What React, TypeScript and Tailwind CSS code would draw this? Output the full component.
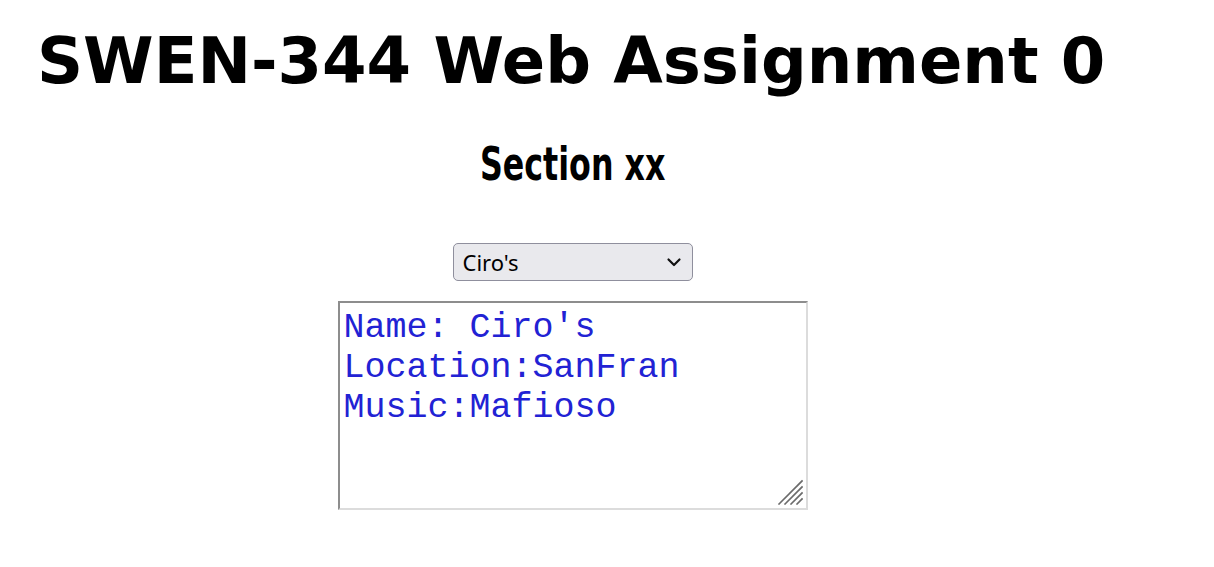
import React from "react";

function Grip() {
  return (
    <svg className="absolute right-[3px] bottom-[3px]" width="26" height="26" viewBox="0 0 26 26">
      <g stroke="#6b6b6b" strokeWidth="1.6" strokeLinecap="square">
        <line x1="2" y1="25" x2="25" y2="2" />
        <line x1="8" y1="25" x2="25" y2="8" />
        <line x1="14" y1="25" x2="25" y2="14" />
        <line x1="20" y1="25" x2="25" y2="20" />
      </g>
    </svg>
  );
}

export default function App() {
  return (
    <div className="bg-white min-h-[567px] w-[1214px] text-black">
      <h1
        className="pl-[37px] pt-[13px] text-[64px] font-bold leading-normal"
        style={{ fontFamily: '"DejaVu Sans", Verdana, sans-serif' }}
      >
        SWEN-344 Web Assignment 0
      </h1>
      <div className="w-[1145px] flex flex-col items-center">
        <h2
          className="mt-[20px] text-[47px] font-bold leading-normal scale-x-[0.75] origin-center whitespace-nowrap"
          style={{ fontFamily: '"DejaVu Sans Condensed", "DejaVu Sans", sans-serif' }}
        >
          Section xx
        </h2>
        <div className="mt-[43px] relative w-[240px] h-[38px] rounded-[5px] border border-[#8f8f9d] bg-[#e9e9ed] flex items-center pl-[9px]">
          <span
            className="text-[22px] leading-none"
            style={{ fontFamily: '"Noto Sans", "Open Sans", sans-serif' }}
          >
            Ciro's
          </span>
          <svg className="absolute right-[10px] top-[12px]" width="16" height="12" viewBox="0 0 16 12">
            <path d="M2.5 3.5 L8 9 L13.5 3.5" fill="none" stroke="#111" strokeWidth="2.2" strokeLinecap="round" strokeLinejoin="round" />
          </svg>
        </div>
        <div className="mt-[20px] relative w-[470px] h-[209px] border-2 border-t-[#8d8d8d] border-l-[#8d8d8d] border-b-[#dcdcdc] border-r-[#dcdcdc] bg-white">
          <div
            className="pl-[4px] pt-[5px] text-[35px] leading-[40px] text-[#2222d4] whitespace-pre"
            style={{ fontFamily: '"Liberation Mono", "Courier New", monospace' }}
          >
            {"Name: Ciro's\nLocation:SanFran\nMusic:Mafioso"}
          </div>
          <Grip />
        </div>
      </div>
    </div>
  );
}
